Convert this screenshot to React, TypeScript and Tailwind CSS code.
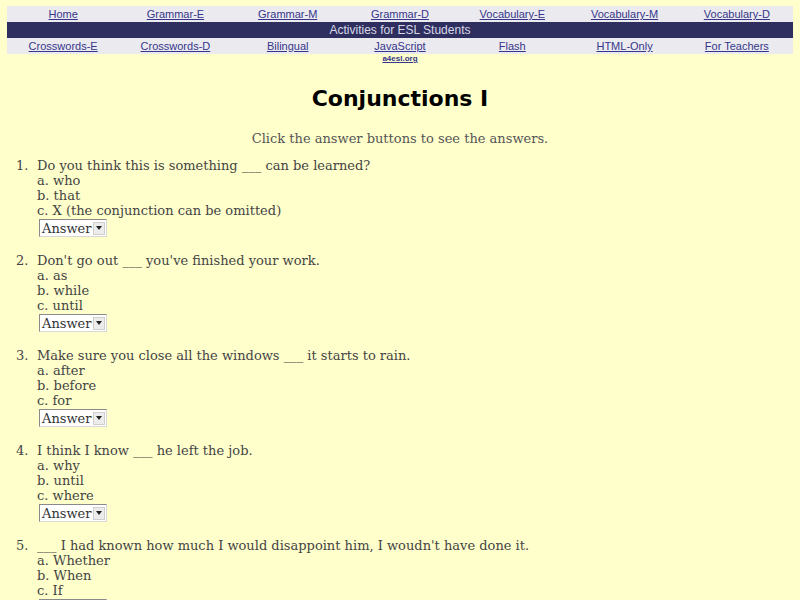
import React from "react";

const row1 = ["Home", "Grammar-E", "Grammar-M", "Grammar-D", "Vocabulary-E", "Vocabulary-M", "Vocabulary-D"];
const row3 = ["Crosswords-E", "Crosswords-D", "Bilingual", "JavaScript", "Flash", "HTML-Only", "For Teachers"];

const questions: { q: React.ReactNode; opts: string[] }[] = [
  { q: <>Do you think this is something ___ can be learned?</>, opts: ["a. who", "b. that", "c. X (the conjunction can be omitted)"] },
  { q: <>Don't go out ___ you've finished your work.</>, opts: ["a. as", "b. while", "c. until"] },
  { q: <>Make sure you close all the windows ___ it starts to rain.</>, opts: ["a. after", "b. before", "c. for"] },
  { q: <>I think I know ___ he left the job.</>, opts: ["a. why", "b. until", "c. where"] },
  { q: <>___ I had known how much I would disappoint him, I woudn't have done it.</>, opts: ["a. Whether", "b. When", "c. If"] },
];

function AnswerSelect() {
  return (
    <div className="flex h-[18px] w-[68px] items-center border border-[#8a8a8a] border-r-[#d8d8d8] border-b-[#d8d8d8] bg-white pl-[2px] text-[13px] leading-none text-[#333]">
      <span className="flex-1">Answer</span>
      <span className="mr-[1px] flex h-[13px] w-[12px] items-center justify-center border border-[#cfcfcf] bg-[#ececec]">
        <svg width="6" height="4" viewBox="0 0 6 4"><path d="M0 0h6L3 4z" fill="#222" /></svg>
      </span>
    </div>
  );
}

export default function App() {
  return (
    <div className="h-[600px] w-[800px] overflow-hidden bg-[#ffffcc] pt-[6px]" style={{ fontFamily: "'DejaVu Serif', serif" }}>
      <div className="mx-[7px] text-[11px]" style={{ fontFamily: "'Liberation Sans', Arial, sans-serif" }}>
        <div className="grid h-[16px] grid-cols-7 items-center bg-[#ebebef]">
          {row1.map((t) => (
            <div key={t} className="text-center text-[#36368a] underline">{t}</div>
          ))}
        </div>
        <div className="flex h-[16px] items-center justify-center bg-[#2f2f5f] text-[12px] text-[#d8d8e8]">
          Activities for ESL Students
        </div>
        <div className="grid h-[16px] grid-cols-7 items-center bg-[#ebebef]">
          {row3.map((t) => (
            <div key={t} className="text-center text-[#36368a] underline">{t}</div>
          ))}
        </div>
        <div className="grid grid-cols-7">
          <div className="col-start-4 text-center text-[8px] font-bold leading-[10px] text-[#36368a] underline">a4esl.org</div>
        </div>
      </div>

      <h1 className="mt-[21px] text-center text-[22px] font-bold leading-[28px] text-black" style={{ fontFamily: "'Comic Sans MS', 'DejaVu Sans', sans-serif" }}>
        Conjunctions I
      </h1>
      <p className="mt-[18px] text-center text-[13px] leading-[16px] text-[#555]">Click the answer buttons to see the answers.</p>

      <ol className="mt-[11px] text-[13px] leading-[15px] text-[#444]">
        {questions.map((item, i) => (
          <li key={i} className="mb-[16px] flex">
            <span className="w-[37px] pl-[16px]">{i + 1}.</span>
            <div className="flex flex-col">
              <span>{item.q}</span>
              {item.opts.map((o) => (
                <span key={o}>{o}</span>
              ))}
              <div className="mt-[1px] ml-[2px]">
                <AnswerSelect />
              </div>
            </div>
          </li>
        ))}
      </ol>
    </div>
  );
}
